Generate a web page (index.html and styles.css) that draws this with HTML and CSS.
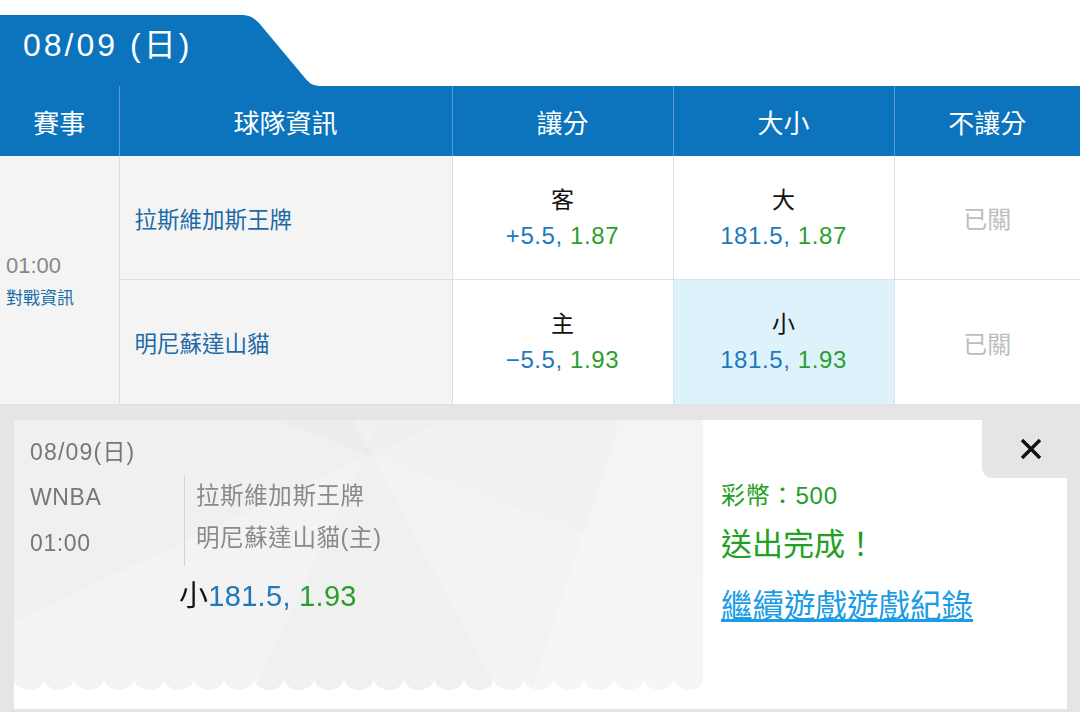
FILE: index.html
```html
<!DOCTYPE html>
<html lang="zh-Hant">
<head>
    <meta charset="UTF-8">
    <meta name="viewport" content="width=device-width, initial-scale=1.0">
    <title>WNBA 投注</title>
    <link rel="stylesheet" href="styles.css">
</head>
<body>
    <div class="date-tab">
        <span class="date-tab-label">08/09 (日)</span>
        <svg class="date-tab-slope" width="90" height="71" viewBox="0 0 90 71">
            <path d="M0 0 C10 0 14 3 19 8 L65 63 C70 69 73 71 82 71 L0 71 Z" fill="#0b74bc"/>
        </svg>
    </div>

    <table class="odds-table">
        <colgroup>
            <col style="width: 119px">
            <col style="width: 333px">
            <col style="width: 221px">
            <col style="width: 221px">
            <col style="width: 186px">
        </colgroup>
        <thead>
            <tr>
                <th>賽事</th>
                <th>球隊資訊</th>
                <th>讓分</th>
                <th>大小</th>
                <th>不讓分</th>
            </tr>
        </thead>
        <tbody>
            <tr>
                <td class="match" rowspan="2">
                    <div class="match-time">01:00</div>
                    <a class="match-link" href="#">對戰資訊</a>
                </td>
                <td class="team">拉斯維加斯王牌</td>
                <td class="bet">
                    <div class="bet-side">客</div>
                    <div class="bet-line"><span class="num">+5.5,</span> <span class="rate">1.87</span></div>
                </td>
                <td class="bet">
                    <div class="bet-side">大</div>
                    <div class="bet-line"><span class="num">181.5,</span> <span class="rate">1.87</span></div>
                </td>
                <td class="closed">已關</td>
            </tr>
            <tr>
                <td class="team">明尼蘇達山貓</td>
                <td class="bet">
                    <div class="bet-side">主</div>
                    <div class="bet-line"><span class="num">&minus;5.5,</span> <span class="rate">1.93</span></div>
                </td>
                <td class="bet selected">
                    <div class="bet-side">小</div>
                    <div class="bet-line"><span class="num">181.5,</span> <span class="rate">1.93</span></div>
                </td>
                <td class="closed">已關</td>
            </tr>
        </tbody>
    </table>

    <div class="receipt-wrap">
        <div class="receipt">
            <div class="ticket">
                <div class="ticket-date">08/09(日)</div>
                <div class="ticket-info">
                    <div class="ticket-meta">
                        <div>WNBA</div>
                        <div>01:00</div>
                    </div>
                    <div class="ticket-teams">
                        <div>拉斯維加斯王牌</div>
                        <div>明尼蘇達山貓(主)</div>
                    </div>
                </div>
                <div class="ticket-bet">小<span class="num">181.5,</span> <span class="rate">1.93</span></div>
            </div>
            <div class="result">
                <div class="result-coins">彩幣：500</div>
                <div class="result-done">送出完成！</div>
                <a class="result-link" href="#">繼續遊戲遊戲紀錄</a>
            </div>
        </div>
        <button class="close-btn" type="button" aria-label="關閉">
            <svg width="22" height="22" viewBox="0 0 22 22">
                <path d="M2 2 L20 20 M20 2 L2 20" stroke="#111" stroke-width="3.4" stroke-linecap="butt"/>
            </svg>
        </button>
    </div>
</body>
</html>
```

FILE: styles.css
```css
body {
    margin: 0;
    background-color: #ffffff;
    font-family: "Liberation Sans", "Noto Sans CJK TC", sans-serif;
    color: #222222;
    width: 1080px;
    height: 712px;
    overflow: hidden;
}

/* date tab */

.date-tab {
    display: flex;
    margin-top: 15px;
    height: 71px;
}

.date-tab-label {
    width: 217px;
    padding-left: 23px;
    background-color: #0b74bc;
    color: #ffffff;
    font-size: 32px;
    letter-spacing: 3px;
    line-height: 60px;
}

.date-tab-slope {
    display: block;
}

/* odds table */

.odds-table {
    width: 1080px;
    border-collapse: collapse;
    table-layout: fixed;
}

.odds-table th {
    height: 70px;
    padding: 0;
    background-color: #0b74bc;
    color: #ffffff;
    font-size: 26px;
    font-weight: normal;
}

.odds-table th + th {
    border-left: 1px solid #5a9dd2;
}

.odds-table td {
    padding: 0;
    border: 1px solid #d6e2ec;
    vertical-align: middle;
}

.odds-table tbody tr:first-child td {
    border-top: none;
}

.odds-table tr td:last-child {
    border-right: none;
}

.match {
    height: 248px;
    padding-left: 6px !important;
    background-color: #f4f4f4;
    border-left: none !important;
    border-right-color: #dcdcdc !important;
}

.match-time {
    color: #888888;
    font-size: 22px;
    line-height: 32px;
}

.match-link {
    display: block;
    margin-top: 5px;
    color: #1a6ca8;
    font-size: 17px;
    line-height: 24px;
    text-decoration: none;
}

.team {
    height: 123px;
    padding-left: 15px !important;
    background-color: #f4f4f4;
    color: #1c6aa6;
    font-size: 22.5px;
    border-color: #dcdfe3 !important;
}

.bet {
    text-align: center;
}

.bet.selected {
    background-color: #def2fc;
}

.bet-side {
    color: #111111;
    font-size: 23px;
    line-height: 30px;
}

.bet-line {
    margin-top: 6px;
    font-size: 24px;
    letter-spacing: 0.6px;
    line-height: 30px;
}

.num {
    color: #1e78bd;
}

.rate {
    color: #2b9f2b;
}

.closed {
    text-align: center;
    color: #bdbdbd;
    font-size: 24px;
}

/* receipt */

.receipt-wrap {
    position: relative;
    height: 289px;
    padding: 15px 13px 3px 14px;
    background-color: #e5e5e5;
}

.receipt {
    display: flex;
    height: 289px;
    background-color: #ffffff;
}

.ticket {
    width: 673px;
    height: 253px;
    padding: 17px 0 0 16px;
    background-color: #f0f0f0;
    background-image:
        linear-gradient(62deg, rgba(255, 255, 255, 0) 58%, rgba(255, 255, 255, 0.22) 58%),
        linear-gradient(155deg, rgba(0, 0, 0, 0.012) 34%, rgba(255, 255, 255, 0) 34%),
        linear-gradient(-72deg, rgba(255, 255, 255, 0.22) 22%, rgba(255, 255, 255, 0) 22%),
        linear-gradient(20deg, rgba(255, 255, 255, 0) 70%, rgba(0, 0, 0, 0.012) 70%),
        linear-gradient(115deg, rgba(255, 255, 255, 0.18) 45%, rgba(255, 255, 255, 0) 45%);
    -webkit-mask:
        linear-gradient(#000, #000) top left / 100% calc(100% - 11px) no-repeat,
        radial-gradient(ellipse 15px 11px at 50% 0, #000 96%, transparent 100%) bottom left / 30px 11px repeat-x;
    mask:
        linear-gradient(#000, #000) top left / 100% calc(100% - 11px) no-repeat,
        radial-gradient(ellipse 15px 11px at 50% 0, #000 96%, transparent 100%) bottom left / 30px 11px repeat-x;
}

.ticket-date {
    color: #777777;
    font-size: 23px;
    letter-spacing: 1.2px;
    line-height: 30px;
}

.ticket-info {
    display: flex;
    margin-top: 8px;
    color: #777777;
    font-size: 23px;
    letter-spacing: 0.6px;
    line-height: 45px;
}

.ticket-meta {
    width: 154px;
}

.ticket-meta div:last-child {
    margin-top: 1px;
}

.ticket-teams {
    padding-left: 11px;
    border-left: 1px solid #d4d4d4;
    color: #8a8a8a;
    font-size: 23.5px;
    line-height: 42px;
}

.ticket-bet {
    margin-top: 12px;
    padding-left: 149px;
    color: #111111;
    font-size: 29px;
    letter-spacing: 0.3px;
    line-height: 36px;
}

.result {
    flex: 1;
    padding: 61px 0 0 18px;
}

.result-coins {
    color: #22a022;
    font-size: 24px;
    letter-spacing: 0.8px;
    line-height: 30px;
}

.result-done {
    margin-top: 14px;
    color: #22a022;
    font-size: 31px;
    line-height: 40px;
}

.result-link {
    display: inline-block;
    margin-top: 21px;
    color: #1b9ce4;
    font-size: 31.5px;
    line-height: 40px;
}

.close-btn {
    position: absolute;
    top: 15px;
    right: 0;
    width: 98px;
    height: 58px;
    padding: 0;
    border: none;
    border-bottom-left-radius: 10px;
    background-color: #e5e5e5;
    display: flex;
    align-items: center;
    justify-content: center;
    cursor: pointer;
}

.close-btn svg {
    display: block;
}
```
